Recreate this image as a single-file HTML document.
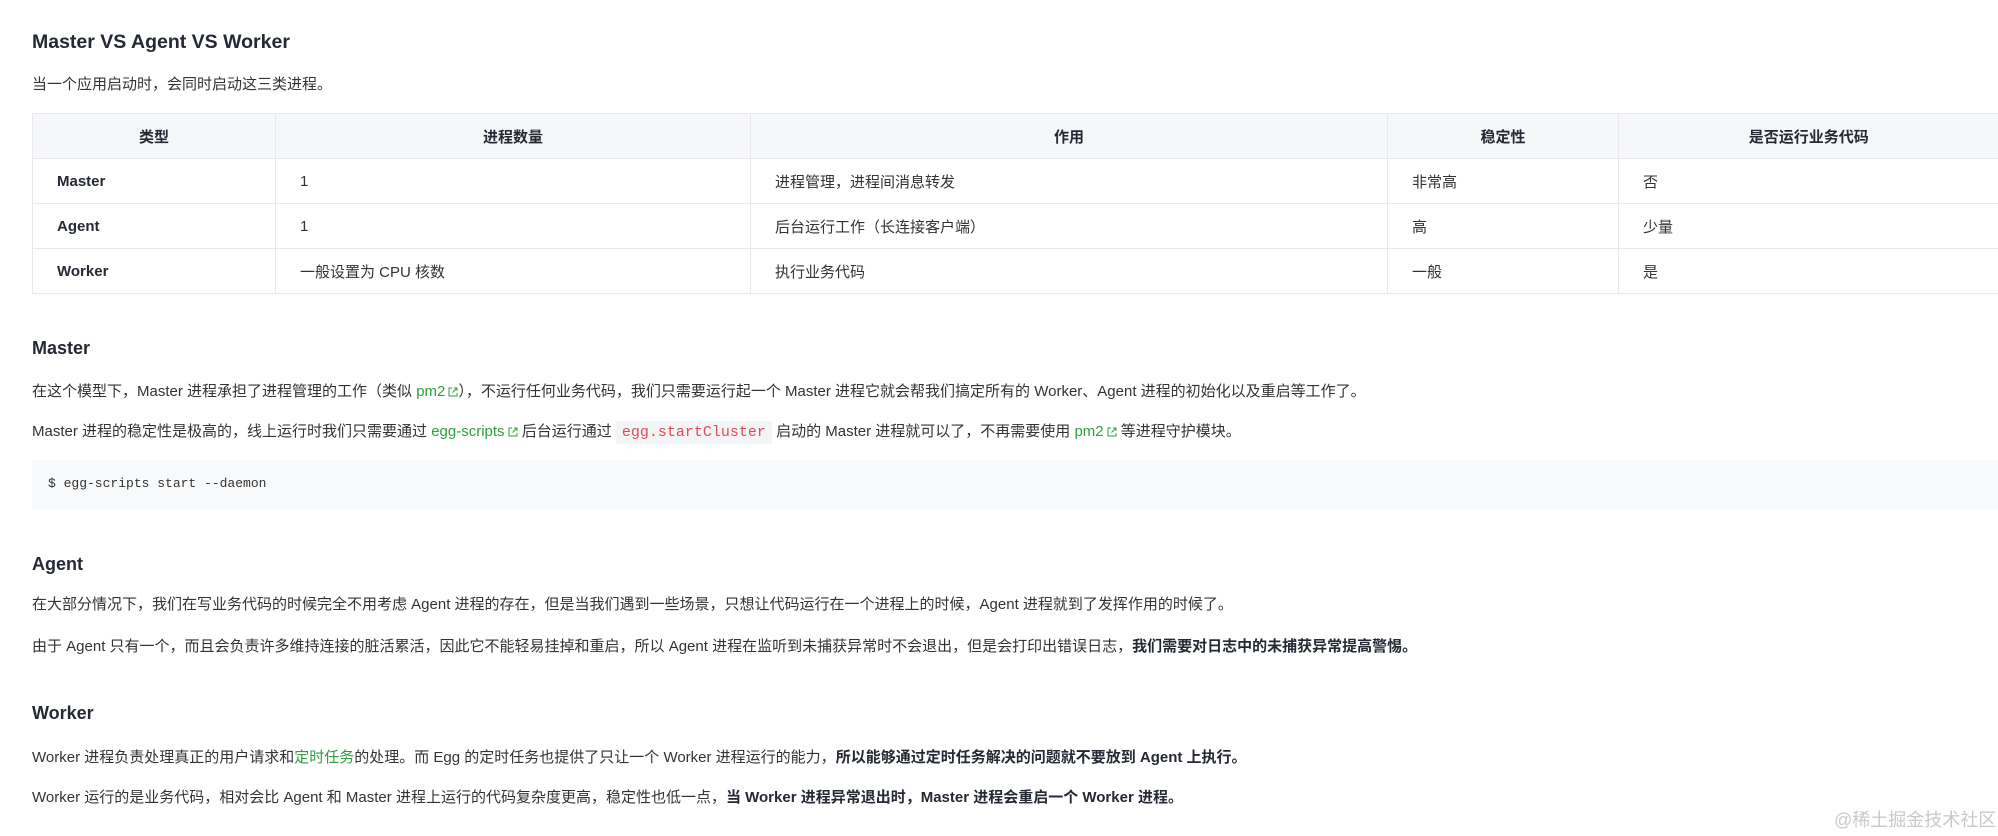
<!DOCTYPE html>
<html><head><meta charset="utf-8"><style>
body{margin:0;width:1998px;height:836px;background:#fff;overflow:hidden;position:relative;font-family:"Liberation Sans","Noto Sans CJK SC",sans-serif;color:#333;font-size:15px}
.l{position:absolute;left:32px;white-space:nowrap;line-height:24px}
h2,h3{margin:0;position:absolute;left:32px;color:#252933;font-weight:600;white-space:nowrap}
h2{font-size:19.5px;line-height:28px}
h3{font-size:18px;line-height:26px}
a{color:#2ea03c;text-decoration:none}
b{color:#252933}
.ic{display:inline-block;vertical-align:-1px;margin-left:3px}
code{font-family:"Liberation Mono",monospace;color:#e4495b;background:#f3f4f5;padding:3px 6px;border-radius:2px;font-size:15px}
table{position:absolute;left:32px;top:113px;border-collapse:collapse;font-size:15px;table-layout:fixed;width:1966px}
td,th{border:1px solid #e8e8ea;height:44px;padding:0 24px;text-align:left;color:#333;white-space:nowrap}
th{background:#f6f7f9;text-align:center;font-weight:600;color:#252933}
td.f{font-weight:600;color:#252933}
tr>*:last-child{border-right:none}
.code{position:absolute;left:32px;top:460px;width:1966px;height:49px;background:#f8f9fa}
.code span{position:absolute;left:16px;top:13px;font-family:"Liberation Mono",monospace;font-size:13px;color:#333;line-height:22px}
.wm{position:absolute;left:1834px;top:806px;font-size:18px;color:#c8c9cc;white-space:nowrap}
</style></head><body>
<h2 style="top:28px">Master VS Agent VS Worker</h2>
<div class="l" style="top:73px">当一个应用启动时，会同时启动这三类进程。</div>
<table>
<colgroup><col style="width:243px"><col style="width:475px"><col style="width:637px"><col style="width:231px"><col style="width:380px"></colgroup>
<tr><th>类型</th><th>进程数量</th><th>作用</th><th>稳定性</th><th>是否运行业务代码</th></tr>
<tr><td class="f">Master</td><td>1</td><td>进程管理，进程间消息转发</td><td>非常高</td><td>否</td></tr>
<tr><td class="f">Agent</td><td>1</td><td>后台运行工作（长连接客户端）</td><td>高</td><td>少量</td></tr>
<tr><td class="f">Worker</td><td>一般设置为 CPU 核数</td><td>执行业务代码</td><td>一般</td><td>是</td></tr>
</table>
<h3 style="top:335px">Master</h3>
<div class="l" style="top:380px">在这个模型下，Master 进程承担了进程管理的工作（类似 <a>pm2<svg class="ic" width="10" height="10" viewBox="0 0 10 10"><path d="M4 1H1v8h8V6M6 1h3v3M9 1L4.5 5.5" fill="none" stroke="#2ea03c" stroke-width="1"/></svg></a>），不运行任何业务代码，我们只需要运行起一个 Master 进程它就会帮我们搞定所有的 Worker、Agent 进程的初始化以及重启等工作了。</div>
<div class="l" style="top:420px">Master 进程的稳定性是极高的，线上运行时我们只需要通过 <a>egg-scripts<svg class="ic" width="10" height="10" viewBox="0 0 10 10"><path d="M4 1H1v8h8V6M6 1h3v3M9 1L4.5 5.5" fill="none" stroke="#2ea03c" stroke-width="1"/></svg></a> 后台运行通过 <code>egg.startCluster</code> 启动的 Master 进程就可以了，不再需要使用 <a>pm2<svg class="ic" width="10" height="10" viewBox="0 0 10 10"><path d="M4 1H1v8h8V6M6 1h3v3M9 1L4.5 5.5" fill="none" stroke="#2ea03c" stroke-width="1"/></svg></a> 等进程守护模块。</div>
<div class="code"><span>$ egg-scripts start --daemon</span></div>
<h3 style="top:551px">Agent</h3>
<div class="l" style="top:593px">在大部分情况下，我们在写业务代码的时候完全不用考虑 Agent 进程的存在，但是当我们遇到一些场景，只想让代码运行在一个进程上的时候，Agent 进程就到了发挥作用的时候了。</div>
<div class="l" style="top:635px">由于 Agent 只有一个，而且会负责许多维持连接的脏活累活，因此它不能轻易挂掉和重启，所以 Agent 进程在监听到未捕获异常时不会退出，但是会打印出错误日志，<b>我们需要对日志中的未捕获异常提高警惕。</b></div>
<h3 style="top:700px">Worker</h3>
<div class="l" style="top:746px">Worker 进程负责处理真正的用户请求和<a>定时任务</a>的处理。而 Egg 的定时任务也提供了只让一个 Worker 进程运行的能力，<b>所以能够通过定时任务解决的问题就不要放到 Agent 上执行。</b></div>
<div class="l" style="top:786px">Worker 运行的是业务代码，相对会比 Agent 和 Master 进程上运行的代码复杂度更高，稳定性也低一点，<b>当 Worker 进程异常退出时，Master 进程会重启一个 Worker 进程。</b></div>
<div class="wm">@稀土掘金技术社区</div>
</body></html>
